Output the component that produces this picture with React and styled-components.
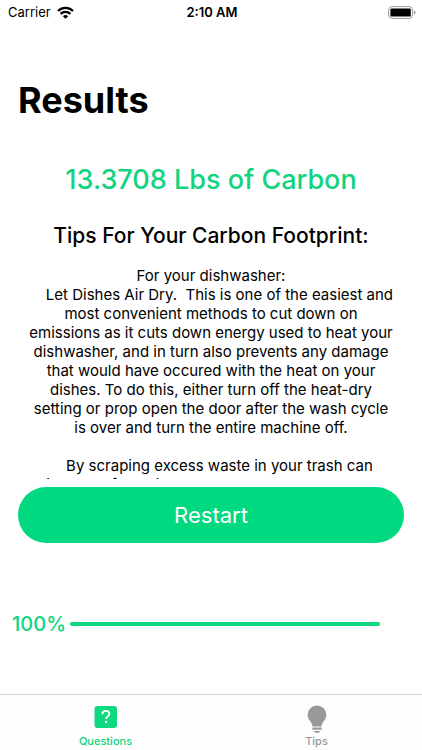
import React from 'react'
import styled, { createGlobalStyle } from 'styled-components'

const GlobalStyle = createGlobalStyle`
    * {
        box-sizing: border-box;
    }

    body {
        margin: 0;
        background-color: #fff;
        color: #000;
        font-family: Inter, "Liberation Sans", sans-serif;
    }
`;

const Screen = styled.div`
    display: flex;
    flex-direction: column;
    min-height: 100vh;
`;

const StatusBar = styled.header`
    display: grid;
    grid-template-columns: 1fr auto 1fr;
    align-items: center;
    height: 24px;
    padding: 0 6px 0 8px;
    font-size: 13px;

    time {
        font-weight: 600;
    }
`;

const Carrier = styled.div`
    display: flex;
    align-items: center;
    gap: 6px;
`;

const Battery = styled.svg`
    justify-self: end;
`;

const Main = styled.main`
    display: flex;
    flex: 1;
    flex-direction: column;
    padding: 52px 18px 0;
`;

const Title = styled.h1`
    margin: 0;
    font-size: 36px;
    font-weight: 700;
    line-height: 48px;
`;

const Total = styled.h2`
    margin: 36px 0 0;
    color: #10d480;
    font-size: 27px;
    font-weight: 500;
    line-height: 40px;
    text-align: center;
`;

const TipsTitle = styled.h2`
    margin: 20px 0 0;
    font-size: 21px;
    font-weight: 500;
    line-height: 32px;
    text-align: center;
`;

const TipsText = styled.p`
    height: 213px;
    margin: 14px 0 0;
    overflow: hidden;
    font-size: 15px;
    line-height: 19px;
    text-align: center;
    white-space: pre-wrap;
`;

const RestartButton = styled.button`
    height: 56px;
    margin-top: 8px;
    border: 0;
    border-radius: 28px;
    background-color: #00d980;
    color: #fff;
    font-family: inherit;
    font-size: 22px;
`;

const ProgressRow = styled.div`
    display: flex;
    align-items: center;
    gap: 4px;
    margin: 68px 24px 0 -6px;
    color: #10d480;
    font-size: 20px;
    font-weight: 500;
    line-height: 26px;
`;

const Track = styled.div`
    flex: 1;
    height: 4px;
    border-radius: 2px;
    background-color: #e5e5e5;
`;

const Fill = styled.div`
    height: 100%;
    border-radius: 2px;
    background-color: #10d880;
`;

const TabBar = styled.nav`
    display: grid;
    grid-template-columns: 1fr 1fr;
    height: 56px;
    border-top: 1px solid #d2d2d2;
    background-color: #fdfdfd;
`;

const Tab = styled.a`
    display: flex;
    flex-direction: column;
    align-items: center;
    padding-top: 10px;
    color: ${({ $active }) => ($active ? '#10d480' : '#999')};
    font-size: 11px;
    font-weight: 500;
    line-height: 16px;
    text-decoration: none;
`;

const tips = `For your dishwasher:
    Let Dishes Air Dry.  This is one of the easiest and
most convenient methods to cut down on
emissions as it cuts down energy used to heat your
dishwasher, and in turn also prevents any damage
that would have occured with the heat on your
dishes. To do this, either turn off the heat-dry
setting or prop open the door after the wash cycle
is over and turn the entire machine off.

    By scraping excess waste in your trash can
instead of the sink can save on the water used`;

function WifiIcon() {
    return (
        <svg width="17" height="13" viewBox="0 0 17 13" aria-hidden="true">
            <g fill="none" stroke="#000" strokeWidth="2.3">
                <path d="M1 5a10.6 10.6 0 0 1 15 0" />
                <path d="M3.6 7.9a6.9 6.9 0 0 1 9.8 0" />
            </g>
            <path d="M8.5 12.7 5.9 10.2a3.9 3.9 0 0 1 5.2 0z" />
        </svg>
    )
}

function BatteryIcon() {
    return (
        <Battery width="28" height="13" viewBox="0 0 28 13" aria-hidden="true">
            <rect x=".6" y=".6" width="24" height="11.8" rx="3.4" fill="none" stroke="#999" />
            <rect x="2.4" y="2.4" width="20.4" height="8.2" rx="1.2" />
            <path d="M26 4.5c2 .6 2 3.4 0 4z" fill="#999" />
        </Battery>
    )
}

function QuestionIcon() {
    return (
        <svg width="23" height="28" viewBox="0 0 23 28" aria-hidden="true">
            <rect x=".5" y="1" width="22.5" height="22" rx="3" fill="#10d880" />
            <path d="M8.4 9.3c0-4.6 7-4.4 7-.5 0 2.5-3.3 2.7-3.3 5.1" fill="none" stroke="#fff" strokeWidth="1.9" />
            <circle cx="12.1" cy="17" r="1.3" fill="#fff" />
        </svg>
    )
}

function BulbIcon() {
    return (
        <svg width="20" height="28" viewBox="0 0 20 28" aria-hidden="true">
            <g fill="#999">
                <path d="M10 .5a9.4 9.2 0 0 0-9.4 9.2c0 5.3 4 6.4 4.6 10.9q.1.8.9.8h7.8q.8 0 .9-.8c.6-4.5 4.6-5.600 4.6-10.900A9.400 9.200 0 0 0 10 .5z" />
                <path d="M5.200 22.600h9.600v1.200q0 1-1 1H6.200q-1 0-1-1z" />
                <path d="M6.600 25.900h6.800q-1 2-3.400 2t-3.400-2z" />
            </g>
        </svg>
    )
}

function App() {
    const progress = 100;

    return (
        <>
            <GlobalStyle />
            <Screen>
                <StatusBar>
                    <Carrier>
                        <span>Carrier</span>
                        <WifiIcon />
                    </Carrier>
                    <time>2:10 AM</time>
                    <BatteryIcon />
                </StatusBar>

                <Main>
                    <Title>Results</Title>
                    <Total>13.3708 Lbs of Carbon</Total>
                    <TipsTitle>Tips For Your Carbon Footprint:</TipsTitle>
                    <TipsText>{tips}</TipsText>
                    <RestartButton type="button">Restart</RestartButton>
                    <ProgressRow>
                        <span>{progress}%</span>
                        <Track>
                            <Fill style={{ width: `${progress}%` }} />
                        </Track>
                    </ProgressRow>
                </Main>

                <TabBar>
                    <Tab href="#questions" $active>
                        <QuestionIcon />
                        Questions
                    </Tab>
                    <Tab href="#tips">
                        <BulbIcon />
                        Tips
                    </Tab>
                </TabBar>
            </Screen>
        </>
    )
}

export default App
